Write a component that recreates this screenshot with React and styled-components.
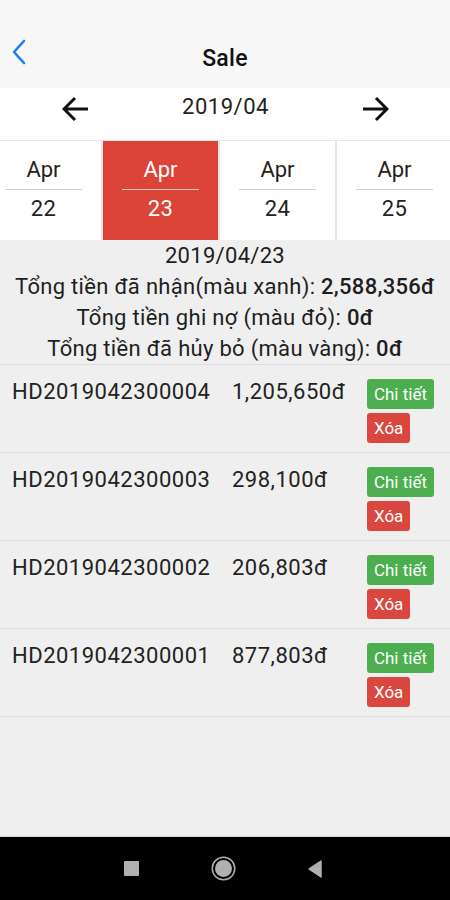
import React from 'react';
import styled, { createGlobalStyle } from 'styled-components';

const GlobalStyle = createGlobalStyle`
  html, body {
    margin: 0;
    padding: 0;
    background: #efefef;
    font-family: Roboto, "Noto Sans", "Liberation Sans", sans-serif;
    color: #222;
  }
`;

const days = [22, 23, 24, 25];
const selectedDay = 23;

const orders = [
  { code: 'HD2019042300004', amount: '1,205,650đ' },
  { code: 'HD2019042300003', amount: '298,100đ' },
  { code: 'HD2019042300002', amount: '206,803đ' },
  { code: 'HD2019042300001', amount: '877,803đ' },
];

function App() {
  return (
    <Screen>
      <GlobalStyle />
      <Header>
        <BackButton aria-label="Back">
          <svg width="16" height="26" viewBox="0 0 16 26">
            <path d="M13 2 L3 13 L13 24" fill="none" stroke="#1a7ff0" strokeWidth="2.6" strokeLinecap="round" strokeLinejoin="round" />
          </svg>
        </BackButton>
        <Title>Sale</Title>
      </Header>

      <MonthBar>
        <ArrowButton aria-label="Previous month">
          <svg width="28" height="26" viewBox="0 0 28 26">
            <path d="M26 13 H3 M13 2 L2 13 L13 24" fill="none" stroke="#111" strokeWidth="3" strokeLinejoin="miter" />
          </svg>
        </ArrowButton>
        <MonthLabel>2019/04</MonthLabel>
        <ArrowButton aria-label="Next month">
          <svg width="28" height="26" viewBox="0 0 28 26">
            <path d="M2 13 H25 M15 2 L26 13 L15 24" fill="none" stroke="#111" strokeWidth="3" strokeLinejoin="miter" />
          </svg>
        </ArrowButton>
      </MonthBar>

      <DayStrip>
        {days.map((d) => (
          <DayCell key={d} $active={d === selectedDay}>
            <DayMonth $active={d === selectedDay}>Apr</DayMonth>
            <DayNumber>{d}</DayNumber>
          </DayCell>
        ))}
      </DayStrip>

      <Summary>
        <SummaryLine>2019/04/23</SummaryLine>
        <SummaryLine>Tổng tiền đã nhận(màu xanh): <b>2,588,356đ</b></SummaryLine>
        <SummaryLine>Tổng tiền ghi nợ (màu đỏ): <b>0đ</b></SummaryLine>
        <SummaryLine>Tổng tiền đã hủy bỏ (màu vàng): <b>0đ</b></SummaryLine>
      </Summary>

      <OrderList>
        {orders.map((o) => (
          <OrderRow key={o.code}>
            <OrderCode>{o.code}</OrderCode>
            <OrderAmount>{o.amount}</OrderAmount>
            <Actions>
              <ActionButton $color="#4cae4f">Chi tiết</ActionButton>
              <ActionButton $color="#d9473f">Xóa</ActionButton>
            </Actions>
          </OrderRow>
        ))}
      </OrderList>

      <Spacer />

      <NavBar>
        <NavSquare />
        <NavHome />
        <svg width="14" height="18" viewBox="0 0 14 18">
          <path d="M13 1 L1 9 L13 17 Z" fill="#b0b0b0" stroke="#b0b0b0" strokeWidth="1.5" strokeLinejoin="round" />
        </svg>
      </NavBar>
    </Screen>
  );
}

export default App;

const Screen = styled.div`
  width: 450px;
  height: 900px;
  display: flex;
  flex-direction: column;
  background: #efefef;
  overflow: hidden;
`;

const Header = styled.header`
  height: 88px;
  box-sizing: border-box;
  padding-top: 28px;
  display: flex;
  align-items: center;
  justify-content: center;
  position: relative;
  background: #f7f7f7;
`;

const BackButton = styled.button`
  position: absolute;
  left: 11px;
  top: 39px;
  border: 0;
  padding: 0;
  background: none;
  display: flex;
`;

const Title = styled.h1`
  margin: 0;
  font-size: 23px;
  font-weight: 500;
  color: #111;
  letter-spacing: 0.3px;
`;

const MonthBar = styled.div`
  height: 52px;
  background: #fff;
  display: flex;
  align-items: center;
  justify-content: space-between;
  padding: 0 61px 16px 62px;
  box-sizing: border-box;
`;

const ArrowButton = styled.button`
  border: 0;
  padding: 0;
  background: none;
  display: flex;
  margin-top: 6px;
`;

const MonthLabel = styled.div`
  font-size: 22px;
  color: #222;
  letter-spacing: 0.5px;
`;

const DayStrip = styled.div`
  height: 100px;
  display: flex;
  gap: 2px;
  background: #e6e6e6;
  border-top: 1px solid #e6e6e6;
  box-sizing: border-box;
  margin-left: -14px;
  overflow: hidden;
`;

const DayCell = styled.div`
  flex: 0 0 115px;
  box-sizing: border-box;
  padding: 15px 19px 0;
  display: flex;
  flex-direction: column;
  align-items: stretch;
  background: ${(p) => (p.$active ? '#dc4437' : '#fff')};
  color: ${(p) => (p.$active ? '#fff' : '#222')};
`;

const DayMonth = styled.div`
  font-size: 22px;
  text-align: center;
  line-height: 28px;
  padding-bottom: 5px;
  border-bottom: 1px solid ${(p) => (p.$active ? 'rgba(255,255,255,0.75)' : '#cfcfcf')};
`;

const DayNumber = styled.div`
  font-size: 22px;
  text-align: center;
  line-height: 28px;
  padding-top: 5px;
  letter-spacing: 0.5px;
`;

const Summary = styled.div`
  display: flex;
  flex-direction: column;
  align-items: center;
  border-bottom: 1px solid #dcdcdc;
`;

const SummaryLine = styled.div`
  font-size: 22px;
  line-height: 31px;
  letter-spacing: 0.3px;
  color: #1e1e1e;
  white-space: nowrap;

  b {
    font-weight: 500;
  }
`;

const OrderList = styled.ul`
  list-style: none;
  margin: 0;
  padding: 0;
`;

const OrderRow = styled.li`
  height: 88px;
  box-sizing: border-box;
  padding: 14px 16px 0 12px;
  display: grid;
  grid-template-columns: 220px 1fr auto;
  align-items: start;
  border-bottom: 1px solid #dcdcdc;
`;

const OrderCode = styled.div`
  font-size: 22px;
  line-height: 26px;
  letter-spacing: 0.5px;
  color: #222;
  white-space: nowrap;
`;

const OrderAmount = styled(OrderCode)``;

const Actions = styled.div`
  display: flex;
  flex-direction: column;
  align-items: flex-start;
  gap: 4px;
`;

const ActionButton = styled.button`
  border: 0;
  border-radius: 3px;
  background: ${(p) => p.$color};
  color: #fff;
  font-family: Roboto, "Noto Sans", "Liberation Sans", sans-serif;
  font-size: 17px;
  height: 30px;
  padding: 0 7px;
  line-height: 30px;
`;

const Spacer = styled.div`
  flex: 1;
  border-bottom: 1px solid #d8d8d8;
`;

const NavBar = styled.nav`
  height: 63px;
  background: #000;
  display: flex;
  align-items: center;
  justify-content: center;
  gap: 76px;
  padding-right: 4px;
`;

const NavSquare = styled.div`
  width: 15px;
  height: 15px;
  background: #b0b0b0;
  border-radius: 1px;
`;

const NavHome = styled.div`
  width: 17px;
  height: 17px;
  border-radius: 50%;
  background: #b0b0b0;
  box-shadow: 0 0 0 2px #000, 0 0 0 3.5px #b0b0b0;
`;
